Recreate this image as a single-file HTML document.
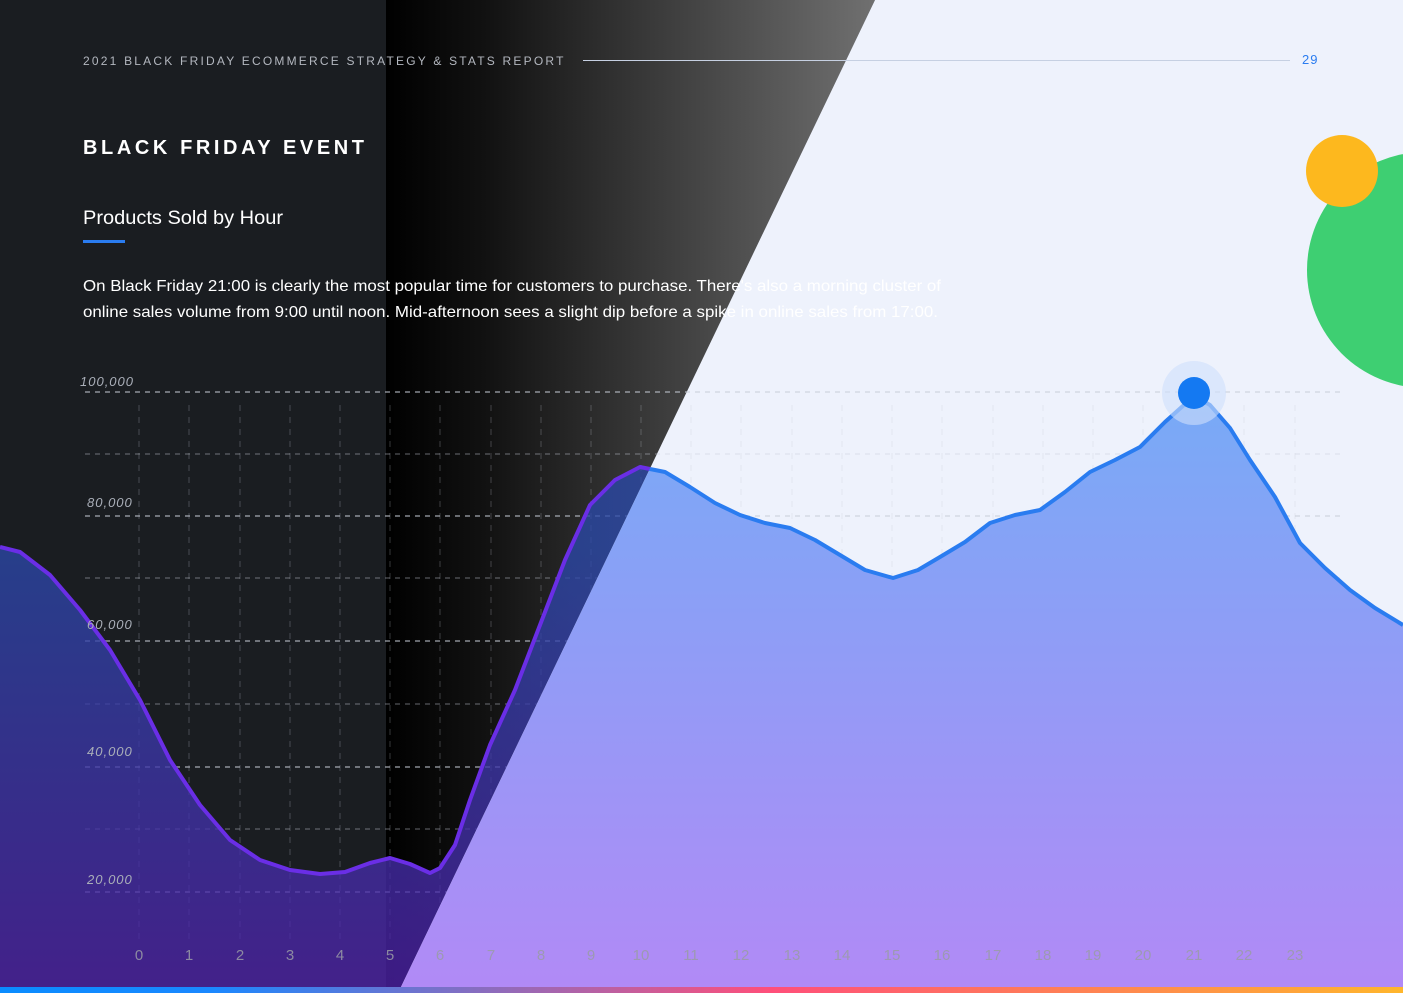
<!DOCTYPE html>
<html><head><meta charset="utf-8"><style>
html,body{margin:0;padding:0;background:#1a1d21;}
svg{display:block;font-family:"Liberation Sans",sans-serif;}
</style></head><body>
<svg width="1403" height="993" viewBox="0 0 1403 993" xmlns="http://www.w3.org/2000/svg">
<defs>
<linearGradient id="bk" x1="386" y1="0" x2="875" y2="0" gradientUnits="userSpaceOnUse">
<stop offset="0" stop-color="#000"/><stop offset="0.2" stop-color="#111"/><stop offset="1" stop-color="#707070"/></linearGradient>
<linearGradient id="dk" x1="0" y1="547" x2="0" y2="987" gradientUnits="userSpaceOnUse">
<stop offset="0" stop-color="#2a48a8"/><stop offset="1" stop-color="#4e22a8"/></linearGradient>
<linearGradient id="lt" x1="0" y1="400" x2="0" y2="987" gradientUnits="userSpaceOnUse">
<stop offset="0" stop-color="#78aaf6"/><stop offset="1" stop-color="#b18af6"/></linearGradient>
<linearGradient id="bar" x1="0" y1="0" x2="1403" y2="0" gradientUnits="userSpaceOnUse">
<stop offset="0" stop-color="#0a8cff"/><stop offset="0.15" stop-color="#1a88ff"/><stop offset="0.55" stop-color="#ff4f7a"/><stop offset="1" stop-color="#ffb62c"/></linearGradient>
<clipPath id="cdark"><polygon points="0,0 875,0 398,993 0,993"/></clipPath>
<clipPath id="clight"><polygon points="875,0 1403,0 1403,993 398,993"/></clipPath>
</defs>
<rect width="1403" height="993" fill="#1a1d21"/>
<polygon points="386,0 875,0 398,993 386,993" fill="url(#bk)"/>
<polygon points="875,0 1403,0 1403,993 398,993" fill="#eef2fc"/>
<circle cx="1425" cy="270" r="118" fill="#3ecf72"/>
<circle cx="1342" cy="171" r="36" fill="#fdb81e"/>

<g stroke-dasharray="5 5" stroke-width="2">
<g stroke="rgba(200,205,215,0.5)">
<line x1="85" y1="392" x2="1340" y2="392"/><line x1="85" y1="516" x2="1340" y2="516"/><line x1="85" y1="641" x2="1340" y2="641"/><line x1="85" y1="767" x2="1340" y2="767"/><line x1="85" y1="892" x2="1340" y2="892"/>
</g>
<g stroke="rgba(200,205,215,0.25)">
<line x1="85" y1="454" x2="1340" y2="454"/><line x1="85" y1="578" x2="1340" y2="578"/><line x1="85" y1="704" x2="1340" y2="704"/><line x1="85" y1="829" x2="1340" y2="829"/>
</g>
</g>
<g stroke="rgba(200,205,215,0.18)" stroke-dasharray="6 6" stroke-width="1.5">
<line x1="139" y1="405" x2="139" y2="940"/><line x1="189" y1="405" x2="189" y2="940"/><line x1="240" y1="405" x2="240" y2="940"/><line x1="290" y1="405" x2="290" y2="940"/><line x1="340" y1="405" x2="340" y2="940"/><line x1="390" y1="405" x2="390" y2="940"/><line x1="440" y1="405" x2="440" y2="940"/><line x1="491" y1="405" x2="491" y2="940"/><line x1="541" y1="405" x2="541" y2="940"/><line x1="591" y1="405" x2="591" y2="940"/><line x1="641" y1="405" x2="641" y2="940"/><line x1="691" y1="405" x2="691" y2="940"/><line x1="741" y1="405" x2="741" y2="940"/><line x1="792" y1="405" x2="792" y2="940"/><line x1="842" y1="405" x2="842" y2="940"/><line x1="892" y1="405" x2="892" y2="940"/><line x1="942" y1="405" x2="942" y2="940"/><line x1="993" y1="405" x2="993" y2="940"/><line x1="1043" y1="405" x2="1043" y2="940"/><line x1="1093" y1="405" x2="1093" y2="940"/><line x1="1143" y1="405" x2="1143" y2="940"/><line x1="1194" y1="405" x2="1194" y2="940"/><line x1="1244" y1="405" x2="1244" y2="940"/><line x1="1295" y1="405" x2="1295" y2="940"/>
</g>

<path d="M0,547 L20,552 L50,575 L80,610 L110,650 L140,700 L170,760 L200,805 L230,840 L260,860 L290,870 L320,874 L345,872 L370,863 L390,858 L410,864 L430,873 L440,868 L455,845 L470,800 L490,745 L515,690 L540,625 L565,560 L590,505 L615,480 L640,467 L665,472 L690,487 L715,503 L740,515 L765,523 L790,528 L815,540 L840,555 L865,570 L893,578 L918,570 L940,557 L965,542 L990,523 L1015,515 L1040,510 L1065,492 L1090,472 L1115,460 L1140,447 L1165,422 L1194,396 L1210,405 L1230,428 L1250,460 L1275,497 L1300,543 L1325,568 L1350,590 L1375,608 L1403,625 L1403,987 L0,987 Z" fill="url(#dk)" fill-opacity="0.78" clip-path="url(#cdark)"/>
<path d="M0,547 L20,552 L50,575 L80,610 L110,650 L140,700 L170,760 L200,805 L230,840 L260,860 L290,870 L320,874 L345,872 L370,863 L390,858 L410,864 L430,873 L440,868 L455,845 L470,800 L490,745 L515,690 L540,625 L565,560 L590,505 L615,480 L640,467 L665,472 L690,487 L715,503 L740,515 L765,523 L790,528 L815,540 L840,555 L865,570 L893,578 L918,570 L940,557 L965,542 L990,523 L1015,515 L1040,510 L1065,492 L1090,472 L1115,460 L1140,447 L1165,422 L1194,396 L1210,405 L1230,428 L1250,460 L1275,497 L1300,543 L1325,568 L1350,590 L1375,608 L1403,625 L1403,987 L0,987 Z" fill="url(#lt)" clip-path="url(#clight)"/>
<path d="M0,547 L20,552 L50,575 L80,610 L110,650 L140,700 L170,760 L200,805 L230,840 L260,860 L290,870 L320,874 L345,872 L370,863 L390,858 L410,864 L430,873 L440,868 L455,845 L470,800 L490,745 L515,690 L540,625 L565,560 L590,505 L615,480 L640,467 L665,472 L690,487 L715,503 L740,515 L765,523 L790,528 L815,540 L840,555 L865,570 L893,578 L918,570 L940,557 L965,542 L990,523 L1015,515 L1040,510 L1065,492 L1090,472 L1115,460 L1140,447 L1165,422 L1194,396" fill="none" stroke="#6a2ee6" stroke-width="4" stroke-linejoin="round" clip-path="url(#cdark)"/>
<path d="M590,505 L615,480 L640,467 L665,472 L690,487 L715,503 L740,515 L765,523 L790,528 L815,540 L840,555 L865,570 L893,578 L918,570 L940,557 L965,542 L990,523 L1015,515 L1040,510 L1065,492 L1090,472 L1115,460 L1140,447 L1165,422 L1194,396 L1210,405 L1230,428 L1250,460 L1275,497 L1300,543 L1325,568 L1350,590 L1375,608 L1403,625" fill="none" stroke="#2a7cf0" stroke-width="4" stroke-linejoin="round" clip-path="url(#clight)"/>
<circle cx="1194" cy="393" r="32" fill="#cfe0fb" fill-opacity="0.6"/>
<circle cx="1194" cy="393" r="16" fill="#1479f2"/>

<g fill="#a9aeb8" font-size="13" font-style="italic" letter-spacing="1">
<text x="80" y="386">100,000</text><text x="87" y="507">80,000</text><text x="87" y="629">60,000</text><text x="87" y="756">40,000</text><text x="87" y="884">20,000</text>
</g>
<g fill="#9a9ca6" font-size="15" text-anchor="middle" opacity="0.85">
<text x="139" y="960">0</text><text x="189" y="960">1</text><text x="240" y="960">2</text><text x="290" y="960">3</text><text x="340" y="960">4</text><text x="390" y="960">5</text><text x="440" y="960">6</text><text x="491" y="960">7</text><text x="541" y="960">8</text><text x="591" y="960">9</text><text x="641" y="960">10</text><text x="691" y="960">11</text><text x="741" y="960">12</text><text x="792" y="960">13</text><text x="842" y="960">14</text><text x="892" y="960">15</text><text x="942" y="960">16</text><text x="993" y="960">17</text><text x="1043" y="960">18</text><text x="1093" y="960">19</text><text x="1143" y="960">20</text><text x="1194" y="960">21</text><text x="1244" y="960">22</text><text x="1295" y="960">23</text>
</g>

<text x="83" y="65" fill="#b3b7bf" font-size="12" letter-spacing="1.6" textLength="482" lengthAdjust="spacing">2021 BLACK FRIDAY ECOMMERCE STRATEGY &amp; STATS REPORT</text>
<line x1="583" y1="60.5" x2="1290" y2="60.5" stroke="#c6d0e2" stroke-width="1"/>
<text x="1302" y="64" fill="#2a7cf0" font-size="13" letter-spacing="1">29</text>
<text x="83" y="154" fill="#ffffff" font-size="20" font-weight="bold" letter-spacing="5" textLength="286" lengthAdjust="spacing">BLACK FRIDAY EVENT</text>
<text x="83" y="224" fill="#ffffff" font-size="19" textLength="200" lengthAdjust="spacingAndGlyphs">Products Sold by Hour</text>
<rect x="83" y="240" width="42" height="3" fill="#2a7cf0"/>
<text x="83" y="291" fill="#ffffff" font-size="16" textLength="858" lengthAdjust="spacingAndGlyphs">On Black Friday 21:00 is clearly the most popular time for customers to purchase. There's also a morning cluster of</text>
<text x="83" y="317" fill="#ffffff" font-size="16" textLength="855" lengthAdjust="spacingAndGlyphs">online sales volume from 9:00 until noon. Mid-afternoon sees a slight dip before a spike in online sales from 17:00.</text>

<rect x="0" y="987" width="1403" height="6" fill="url(#bar)"/>
</svg>
</body></html>
